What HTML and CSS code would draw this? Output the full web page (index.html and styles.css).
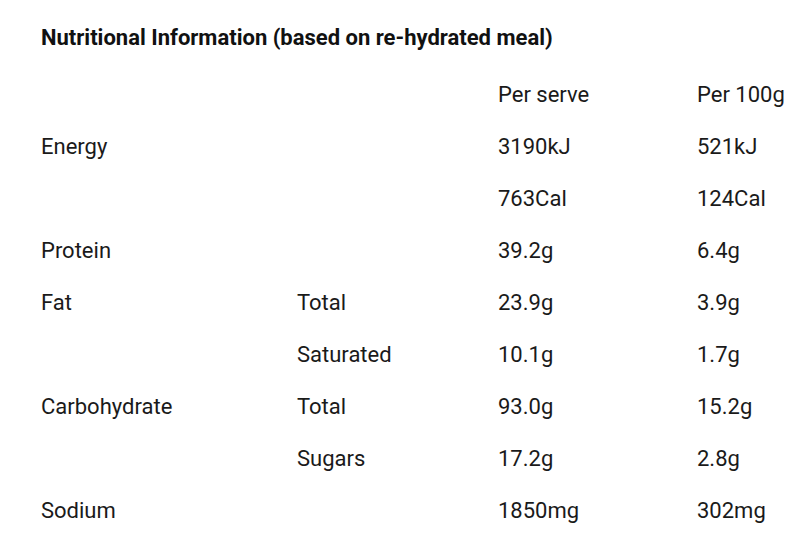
FILE: index.html
```html
<!DOCTYPE html>
<html>
<head>
<meta charset="utf-8">
<link rel="stylesheet" href="styles.css">
</head>
<body>
<div class="panel">
  <h2 class="title">Nutritional Information (based on re-hydrated meal)</h2>
  <table class="nutri">
    <colgroup>
      <col class="c1"><col class="c2"><col class="c3"><col class="c4">
    </colgroup>
    <tr><td></td><td></td><td>Per serve</td><td>Per 100g</td></tr>
    <tr><td>Energy</td><td></td><td>3190kJ</td><td>521kJ</td></tr>
    <tr><td></td><td></td><td>763Cal</td><td>124Cal</td></tr>
    <tr><td>Protein</td><td></td><td>39.2g</td><td>6.4g</td></tr>
    <tr><td>Fat</td><td>Total</td><td>23.9g</td><td>3.9g</td></tr>
    <tr><td></td><td>Saturated</td><td>10.1g</td><td>1.7g</td></tr>
    <tr><td>Carbohydrate</td><td>Total</td><td>93.0g</td><td>15.2g</td></tr>
    <tr><td></td><td>Sugars</td><td>17.2g</td><td>2.8g</td></tr>
    <tr><td>Sodium</td><td></td><td>1850mg</td><td>302mg</td></tr>
  </table>
</div>
</body>
</html>
```
FILE: styles.css
```css
html, body {
  margin: 0;
  padding: 0;
  background: #ffffff;
}
body {
  font-family: Roboto, "Liberation Sans", sans-serif;
  color: #1a1a1a;
}
.panel {
  padding: 24px 0 0 41px;
}
.title {
  margin: 0;
  font-size: 22px;
  font-weight: 700;
  line-height: 28px;
  color: #111;
}
.nutri {
  border-collapse: collapse;
  margin-top: 16px;
  font-size: 22px;
  table-layout: fixed;
  width: 759px;
}
.nutri td {
  padding: 0;
  height: 52px;
  vertical-align: middle;
  white-space: nowrap;
}
.c1 { width: 256px; }
.c2 { width: 201px; }
.c3 { width: 199px; }
.c4 { width: 103px; }
```
